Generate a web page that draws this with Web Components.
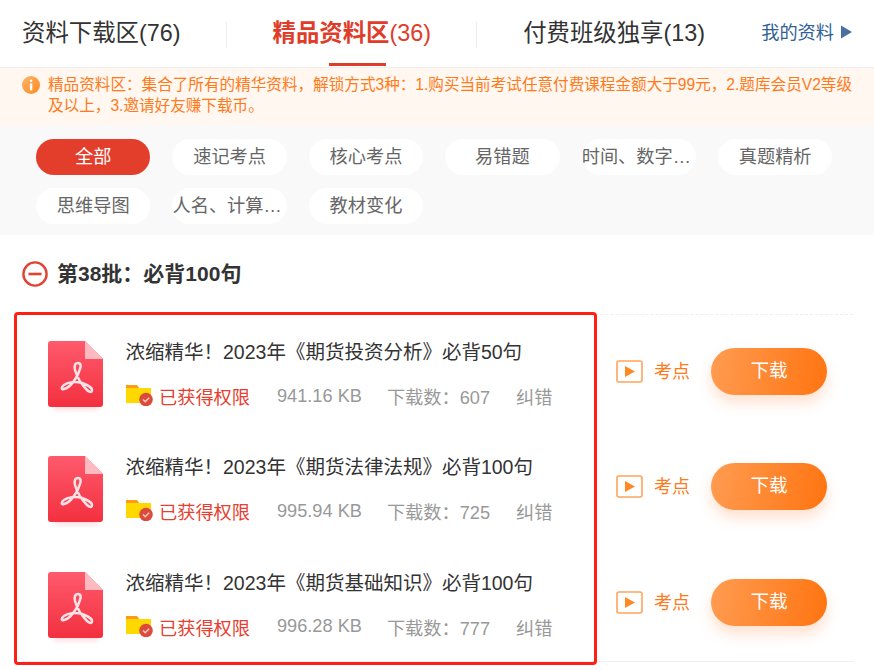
<!DOCTYPE html>
<html lang="zh">
<head>
<meta charset="utf-8">
<title>精品资料区</title>
<style>
	html, body {
		margin: 0;
		background: #fff;
		font-family: "Liberation Sans", "Noto Sans CJK SC", sans-serif;
		color: #333;
	}
	body {
		width: 874px;
		height: 670px;
		overflow: hidden;
	}
</style>
</head>
<body>
<x-tab-bar>
	<x-tab>资料下载区(76)</x-tab>
	<x-tab active><b>精品资料区</b>(36)</x-tab>
	<x-tab>付费班级独享(13)</x-tab>
</x-tab-bar>
<x-notice>精品资料区：集合了所有的精华资料，解锁方式3种：1.购买当前考试任意付费课程金额大于99元，2.题库会员V2等级及以上，3.邀请好友赚下载币。</x-notice>
<x-filter>
	<x-chip active>全部</x-chip>
	<x-chip>速记考点</x-chip>
	<x-chip>核心考点</x-chip>
	<x-chip>易错题</x-chip>
	<x-chip tight>时间、数字…</x-chip>
	<x-chip>真题精析</x-chip>
	<x-chip>思维导图</x-chip>
	<x-chip tight>人名、计算…</x-chip>
	<x-chip>教材变化</x-chip>
</x-filter>
<x-batch-title>第38批：必背100句</x-batch-title>
<x-doc-list>
	<x-doc-row size="941.16 KB" downloads="607">浓缩精华！2023年《期货投资分析》必背50句</x-doc-row>
	<x-doc-row size="995.94 KB" downloads="725">浓缩精华！2023年《期货法律法规》必背100句</x-doc-row>
	<x-doc-row size="996.28 KB" downloads="777">浓缩精华！2023年《期货基础知识》必背100句</x-doc-row>
</x-doc-list>

<script>
(() => {
	/* shadow root の生成をまとめる */
	const define = (name, html, Base = HTMLElement) => {
		customElements.define(name, class extends Base {
			constructor() {
				super();
				this.attachShadow({mode: 'open'}).innerHTML = html;
			}
		});
	};

	define('x-tab-bar', `
		<style>
			:host {
				display: flex;
				height: 67px;
				padding-left: 22px;
				box-sizing: border-box;
				align-items: flex-start;
				position: relative;
			}
			.mine {
				margin-left: auto;
				margin-right: 22px;
				margin-top: 18px;
				display: flex;
				align-items: center;
				gap: 6px;
				height: 26px;
				font-size: 18.2px;
				color: #2f5f96;
			}
			.mine svg {
				width: 12px;
				height: 14px;
				margin-top: 1px;
			}
		</style>
		<slot></slot>
		<div class="mine">我的资料<svg viewBox="0 0 12 14"><path d="M1 0.5 12 7 1 13.5z" fill="#4a6fa5"/></svg></div>
	`);

	define('x-tab', `
		<style>
			:host {
				display: block;
				position: relative;
				height: 67px;
				margin-right: 92px;
				font-size: 23.4px;
				line-height: 67px;
				color: #333;
				white-space: nowrap;
			}
			:host([active]) {
				color: #e03c2a;
			}
			:host::after {
				content: "";
				position: absolute;
				right: -46px;
				top: 22px;
				height: 26px;
				border-right: 1px solid #ececec;
			}
			:host(:last-child)::after {
				display: none;
			}
			:host(:last-child) {
				margin-right: 0;
			}
			:host([active])::before {
				content: "";
				position: absolute;
				left: 56px;
				width: 57px;
				bottom: 1px;
				height: 3px;
				background: #e03c2a;
			}
		</style>
		<slot></slot>
	`);

	define('x-notice', `
		<style>
			:host {
				display: flex;
				gap: 8px;
				height: 58px;
				box-sizing: border-box;
				padding: 7px 20px 0 22px;
				background: #fff7f0;
				border-top: 1px solid #eeeeee;
				font-size: 15.6px;
				line-height: 20.5px;
				color: #ff7a1a;
			}
			svg {
				flex: none;
				width: 18px;
				height: 18px;
				margin-top: 1px;
			}
		</style>
		<svg viewBox="0 0 18 18">
			<defs><linearGradient id="n" x1="0" y1="0" x2="1" y2="1"><stop offset="0" stop-color="#ffb46a"/><stop offset="1" stop-color="#fb8a1e"/></linearGradient></defs>
			<circle cx="9" cy="9" r="9" fill="url(#n)"/>
			<rect x="7.9" y="3.6" width="2.4" height="2.4" rx="1" fill="#fff"/>
			<path d="M7.9 7.4h2.4v7H7.9z" fill="#fff"/>
		</svg>
		<div><slot></slot></div>
	`);

	define('x-filter', `
		<style>
			:host {
				display: grid;
				grid-template-columns: repeat(6, 114.4px);
				grid-auto-rows: 36px;
				column-gap: 22px;
				row-gap: 13px;
				height: 110px;
				box-sizing: border-box;
				padding: 14px 0 0 36px;
				background: #f9f9f9;
			}
		</style>
		<slot></slot>
	`);

	define('x-chip', `
		<style>
			:host {
				display: block;
				border-radius: 18px;
				background: #fff;
				color: #666;
				font-size: 18.2px;
				line-height: 36px;
				text-align: center;
				white-space: nowrap;
				overflow: hidden;
			}
			:host([tight]) {
				padding-right: 5px;
			}
			:host([active]) {
				background: #e33e2b;
				color: #fff;
			}
		</style>
		<slot></slot>
	`);

	define('x-batch-title', `
		<style>
			:host {
				display: flex;
				align-items: center;
				gap: 10px;
				height: 78px;
				padding: 0 0 0 22px;
				font-size: 21px;
				font-weight: 700;
				color: #333;
			}
			svg {
				width: 26px;
				height: 26px;
			}
			.text {
				margin-top: -4px;
				margin-left: -1px;
			}
		</style>
		<svg viewBox="0 0 26 26">
			<circle cx="13" cy="13" r="11.6" fill="none" stroke="#e04432" stroke-width="2.4"/>
			<path d="M6.5 13h13" stroke="#e04432" stroke-width="2.6"/>
		</svg>
		<div class="text"><slot></slot></div>
	`);

	define('x-doc-list', `
		<style>
			:host {
				display: block;
				position: relative;
				margin: 1px 21px 0 22px;
				border-top: 1px dashed #eeeeee;
				border-bottom: 1px solid #eeeeee;
				height: 346px;
			}
			/* 参照画像の赤枠 */
			.frame {
				position: absolute;
				left: -8px;
				top: -3px;
				width: 583px;
				height: 353px;
				box-sizing: border-box;
				border: 3px solid #ff2015;
				border-radius: 4px;
				pointer-events: none;
			}
		</style>
		<slot></slot>
		<div class="frame"></div>
	`);

	define('x-doc-row', `
		<style>
			:host {
				display: flex;
				height: 115.3px;
				box-sizing: border-box;
				padding: 26px 26px 0 26px;
				align-items: flex-start;
			}
			.pdf {
				flex: none;
				width: 56px;
				height: 74px;
				margin-right: 22px;
			}
			.main {
				flex: none;
				width: 490px;
			}
			.title {
				font-size: 19.5px;
				line-height: 24px;
				margin-top: -1px;
				margin-left: -0.5px;
				color: #333;
				white-space: nowrap;
			}
			.meta {
				display: flex;
				align-items: center;
				height: 24px;
				margin-top: 20px;
				font-size: 18.2px;
				color: #999;
				white-space: nowrap;
			}
			.meta svg {
				flex: none;
				width: 27px;
				height: 21px;
				margin-right: 7px;
				margin-bottom: 1px;
			}
			.granted {
				color: #e5402f;
				margin-right: 27px;
				margin-left: -1px;
			}
			.size {
				margin-right: 25px;
			}
			.count {
				margin-right: 26px;
			}
			.point {
				flex: none;
				display: flex;
				align-items: center;
				gap: 12px;
				width: 95px;
				height: 47px;
				margin-top: 7px;
				font-size: 18px;
				color: #ff7a1a;
			}
			.point svg {
				width: 27px;
				height: 23px;
			}
			.point span {
				margin-top: -3px;
				margin-left: -1px;
			}
			.download {
				flex: none;
				width: 116px;
				height: 47px;
				margin-top: 7px;
				border-radius: 24px;
				background: linear-gradient(100deg, #ff9c52, #ff7410);
				box-shadow: 0 8px 14px rgba(255, 120, 40, .22);
				color: #fff;
				font-size: 18.6px;
				line-height: 46px;
				text-align: center;
			}
		</style>
		<svg class="pdf" viewBox="0 0 56 74">
			<defs>
				<linearGradient id="p" x1="0" y1="0" x2="0" y2="1"><stop offset="0" stop-color="#ff5a6c"/><stop offset="1" stop-color="#f2303f"/></linearGradient>
				<filter id="s" x="-20%" y="-10%" width="140%" height="125%"><feGaussianBlur stdDeviation="2.4"/></filter>
			</defs>
			<rect x="6" y="54" width="44" height="15" fill="#f7a0a8" opacity=".35" filter="url(#s)"/>
			<path d="M3 0H37L55 18V63a3 3 0 0 1-3 3H3a3 3 0 0 1-3-3V3a3 3 0 0 1 3-3z" fill="url(#p)"/>
			<path d="M37 0 55 18H37z" fill="#ffb9c0"/>
			<path d="M30 22c-3 0-4 3-3 7 2 7 7 15 12 20 2 2 5 3 5 0 0-3-5-5-10-7-6-2-14-1-18 2-3 2-3 5 0 4 6-1 14-12 16-20 1-3 1-6-2-6z" fill="none" stroke="#ffe3e6" stroke-width="2.5" stroke-linejoin="round"/>
		</svg>
		<div class="main">
			<div class="title"><slot></slot></div>
			<div class="meta">
				<svg viewBox="0 0 27 21">
					<path d="M0 0H11L13 3H25V18H0z" fill="#ffd800"/>
					<path d="M0 0H11L13 3H0z" fill="#ff9a1a"/>
					<circle cx="20" cy="14.5" r="6.8" fill="#dc4a3c"/>
					<path d="M17 14.5l2.2 2.2 4-4" fill="none" stroke="#f6c9c2" stroke-width="1.6"/>
				</svg>
				<span class="granted">已获得权限</span>
				<span class="size"></span>
				<span class="count"></span>
				<span>纠错</span>
			</div>
		</div>
		<div class="point">
			<svg viewBox="0 0 27 23">
				<rect x="1" y="1" width="25" height="21" rx="2" fill="#fff" stroke="#ffa45c" stroke-width="1.6"/>
				<path d="M9 6 19 11.5 9 17z" fill="#ff8a24"/>
			</svg>
			<span>考点</span>
		</div>
		<div class="download">下载</div>
	`, class extends HTMLElement {
		connectedCallback() {
			this.shadowRoot.querySelector('.size').textContent = this.getAttribute('size');
			this.shadowRoot.querySelector('.count').textContent = `下载数：${this.getAttribute('downloads')}`;
		}
	});
})();
</script>
</body>
</html>
